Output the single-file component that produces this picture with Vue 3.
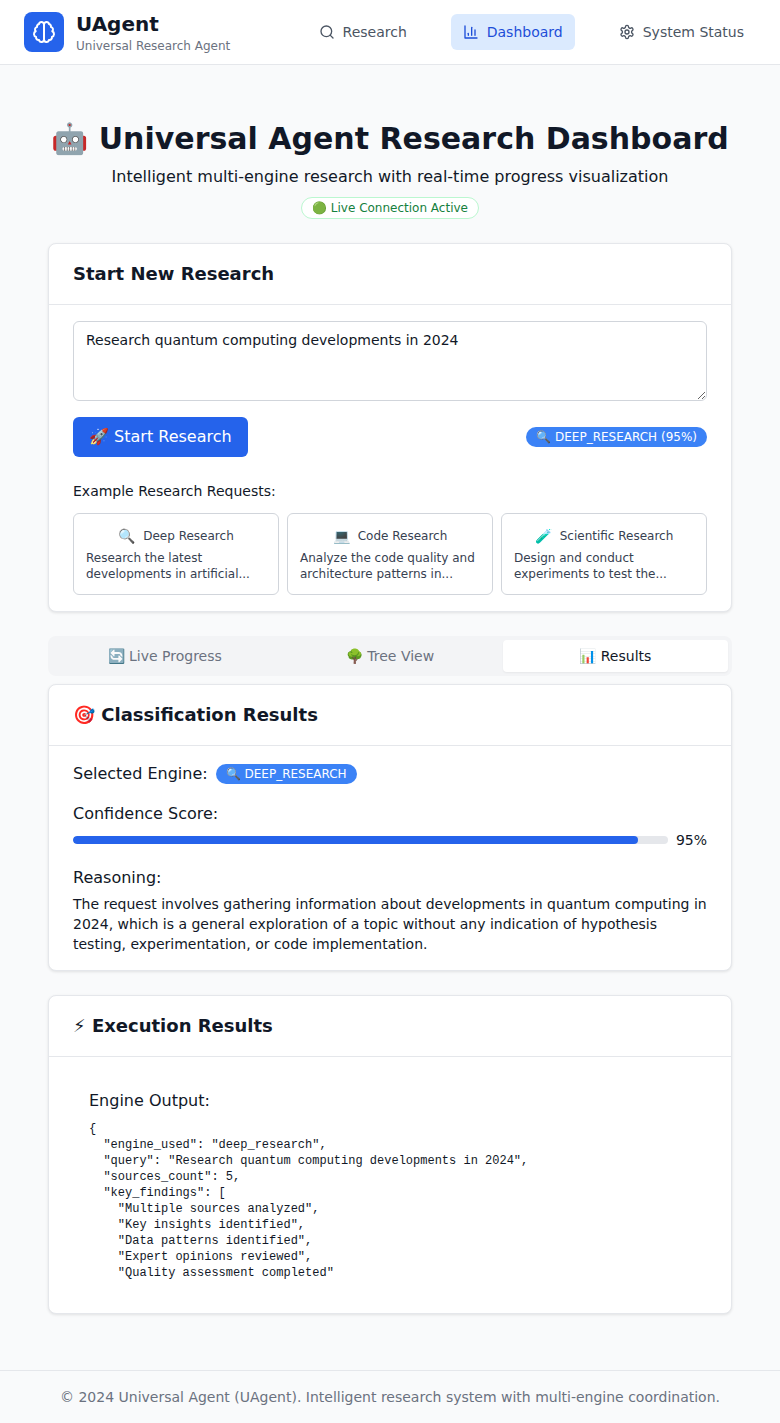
<template>
  <div class="page">
    <header class="topbar">
      <div class="brand">
        <div class="logo">
          <svg width="24" height="24" viewBox="0 0 24 24" fill="none" stroke="currentColor" stroke-width="2" stroke-linecap="round" stroke-linejoin="round">
            <path d="M9.5 2A2.5 2.5 0 0 1 12 4.5v15a2.5 2.5 0 0 1-4.96.44 2.5 2.5 0 0 1-2.96-3.08 3 3 0 0 1-.34-5.58 2.5 2.5 0 0 1 1.32-4.24 2.5 2.5 0 0 1 1.98-3A2.5 2.5 0 0 1 9.5 2Z" />
            <path d="M14.5 2A2.5 2.5 0 0 0 12 4.5v15a2.5 2.5 0 0 0 4.96.44 2.5 2.5 0 0 0 2.96-3.08 3 3 0 0 0 .34-5.58 2.5 2.5 0 0 0-1.32-4.24 2.5 2.5 0 0 0-1.98-3A2.5 2.5 0 0 0 14.5 2Z" />
          </svg>
        </div>
        <div>
          <div class="brand-name">UAgent</div>
          <div class="brand-sub">Universal Research Agent</div>
        </div>
      </div>
      <nav class="nav">
        <a class="nav-item">
          <svg width="16" height="16" viewBox="0 0 24 24" fill="none" stroke="currentColor" stroke-width="2" stroke-linecap="round" stroke-linejoin="round">
            <circle cx="11" cy="11" r="8" /><path d="m21 21-4.3-4.3" />
          </svg>
          Research
        </a>
        <a class="nav-item active">
          <svg width="16" height="16" viewBox="0 0 24 24" fill="none" stroke="currentColor" stroke-width="2" stroke-linecap="round" stroke-linejoin="round">
            <path d="M3 3v18h18" /><path d="M18 17V9" /><path d="M13 17V5" /><path d="M8 17v-3" />
          </svg>
          Dashboard
        </a>
        <a class="nav-item">
          <svg width="16" height="16" viewBox="0 0 24 24" fill="none" stroke="currentColor" stroke-width="2" stroke-linecap="round" stroke-linejoin="round">
            <path d="M12.22 2h-.44a2 2 0 0 0-2 2v.18a2 2 0 0 1-1 1.73l-.43.25a2 2 0 0 1-2 0l-.15-.08a2 2 0 0 0-2.73.73l-.22.38a2 2 0 0 0 .73 2.73l.15.1a2 2 0 0 1 1 1.72v.51a2 2 0 0 1-1 1.74l-.15.09a2 2 0 0 0-.73 2.73l.22.38a2 2 0 0 0 2.73.73l.15-.08a2 2 0 0 1 2 0l.43.25a2 2 0 0 1 1 1.73V20a2 2 0 0 0 2 2h.44a2 2 0 0 0 2-2v-.18a2 2 0 0 1 1-1.73l.43-.25a2 2 0 0 1 2 0l.15.08a2 2 0 0 0 2.73-.73l.22-.39a2 2 0 0 0-.73-2.73l-.15-.08a2 2 0 0 1-1-1.74v-.5a2 2 0 0 1 1-1.74l.15-.09a2 2 0 0 0 .73-2.73l-.22-.38a2 2 0 0 0-2.73-.73l-.15.08a2 2 0 0 1-2 0l-.43-.25a2 2 0 0 1-1-1.73V4a2 2 0 0 0-2-2z" />
            <circle cx="12" cy="12" r="3" />
          </svg>
          System Status
        </a>
      </nav>
    </header>

    <main class="main">
      <section class="hero">
        <h1>🤖 Universal Agent Research Dashboard</h1>
        <p>Intelligent multi-engine research with real-time progress visualization</p>
        <span class="live">🟢 Live Connection Active</span>
      </section>

      <section class="card">
        <div class="card-head"><h2>Start New Research</h2></div>
        <div class="card-body">
          <textarea class="query" v-model="query" rows="3"></textarea>
          <div class="actions">
            <button class="start" type="button">🚀 Start Research</button>
            <span class="pill">🔍 DEEP_RESEARCH (95%)</span>
          </div>
          <div class="examples-label">Example Research Requests:</div>
          <div class="examples">
            <div class="example" v-for="ex in examples" :key="ex.title">
              <div class="example-title"><span class="example-icon">{{ ex.icon }}</span>{{ ex.title }}</div>
              <div class="example-text">{{ ex.text }}</div>
            </div>
          </div>
        </div>
      </section>

      <div class="tabs">
        <div class="tab" v-for="t in tabs" :key="t" :class="{ on: t === tab }">{{ t }}</div>
      </div>

      <section class="card">
        <div class="card-head"><h2>🎯 Classification Results</h2></div>
        <div class="card-body">
          <div class="engine-row">
            <span class="label">Selected Engine:</span>
            <span class="pill">🔍 DEEP_RESEARCH</span>
          </div>
          <div class="label conf-label">Confidence Score:</div>
          <div class="conf-row">
            <div class="track"><div class="fill" :style="{ width: confidence + '%' }"></div></div>
            <span class="conf-value">{{ confidence }}%</span>
          </div>
          <div class="label reason-label">Reasoning:</div>
          <p class="reason">The request involves gathering information about developments in quantum computing in 2024, which is a general exploration of a topic without any indication of hypothesis testing, experimentation, or code implementation.</p>
        </div>
      </section>

      <section class="card">
        <div class="card-head"><h2>⚡ Execution Results</h2></div>
        <div class="card-body">
          <div class="output">
            <div class="label output-label">Engine Output:</div>
            <pre>{{ output }}</pre>
          </div>
        </div>
      </section>
    </main>

    <footer class="footer">© 2024 Universal Agent (UAgent). Intelligent research system with multi-engine coordination.</footer>
  </div>
</template>

<script setup>
import { ref } from 'vue'

const query = ref('Research quantum computing developments in 2024')
const tab = ref('📊 Results')
const tabs = ['🔄 Live Progress', '🌳 Tree View', '📊 Results']
const confidence = 95

const examples = [
  { icon: '🔍', title: 'Deep Research', text: 'Research the latest developments in artificial...' },
  { icon: '💻', title: 'Code Research', text: 'Analyze the code quality and architecture patterns in...' },
  { icon: '🧪', title: 'Scientific Research', text: 'Design and conduct experiments to test the...' }
]

const output = `{
  "engine_used": "deep_research",
  "query": "Research quantum computing developments in 2024",
  "sources_count": 5,
  "key_findings": [
    "Multiple sources analyzed",
    "Key insights identified",
    "Data patterns identified",
    "Expert opinions reviewed",
    "Quality assessment completed"`
</script>

<style>
body {
  background: #f9fafb;
}
</style>

<style scoped>
.page {
  font-family: "DejaVu Sans", sans-serif;
  color: #111827;
  background: #f9fafb;
}
.topbar {
  display: flex;
  justify-content: space-between;
  align-items: center;
  height: 64px;
  padding: 0 24px;
  background: #fff;
  border-bottom: 1px solid #e5e7eb;
}
.brand {
  display: flex;
  align-items: center;
  gap: 12px;
}
.logo {
  width: 40px;
  height: 40px;
  display: flex;
  align-items: center;
  justify-content: center;
  background: #2563eb;
  color: #fff;
  border-radius: 8px;
}
.brand-name {
  font-size: 20px;
  line-height: 28px;
  font-weight: 700;
}
.brand-sub {
  font-size: 12px;
  line-height: 16px;
  color: #6b7280;
}
.nav {
  display: flex;
  gap: 32px;
}
.nav-item {
  display: flex;
  align-items: center;
  gap: 8px;
  padding: 8px 12px;
  font-size: 14px;
  line-height: 20px;
  color: #4b5563;
  border-radius: 6px;
}
.nav-item.active {
  background: #dbeafe;
  color: #1d4ed8;
}
.main {
  padding: 56px 48px 32px;
}
.hero {
  text-align: center;
  margin-bottom: 24px;
}
.hero h1 {
  margin: 0 0 8px;
  font-size: 30px;
  line-height: 36px;
  font-weight: 700;
}
.hero p {
  margin: 0 0 8px;
  font-size: 16px;
  line-height: 24px;
  color: #111827;
}
.live {
  display: inline-block;
  padding: 2px 10px;
  font-size: 12px;
  line-height: 16px;
  color: #15803d;
  background: #fff;
  border: 1px solid #bbf7d0;
  border-radius: 999px;
}
.card {
  background: #fff;
  border: 1px solid #e5e7eb;
  border-radius: 8px;
  box-shadow: 0 1px 3px rgba(0, 0, 0, 0.1);
  margin-bottom: 24px;
}
.card-head {
  padding: 16px 24px;
  border-bottom: 1px solid #e5e7eb;
}
.card-head h2 {
  margin: 0;
  font-size: 18px;
  line-height: 28px;
  font-weight: 700;
}
.card-body {
  padding: 16px 24px;
}
.query {
  display: block;
  box-sizing: border-box;
  width: 100%;
  height: 80px;
  padding: 8px 12px;
  font-family: inherit;
  font-size: 14px;
  line-height: 20px;
  color: #111827;
  border: 1px solid #d1d5db;
  border-radius: 6px;
}
.actions {
  display: flex;
  justify-content: space-between;
  align-items: center;
  margin-top: 16px;
}
.start {
  padding: 8px 16px;
  font-family: inherit;
  font-size: 16px;
  line-height: 24px;
  color: #fff;
  background: #2563eb;
  border: 0;
  border-radius: 6px;
}
.pill {
  display: inline-block;
  padding: 2px 10px;
  font-size: 12px;
  line-height: 16px;
  color: #fff;
  background: #3b82f6;
  border-radius: 999px;
}
.examples-label {
  margin-top: 24px;
  font-size: 14px;
  line-height: 20px;
}
.examples {
  display: grid;
  grid-template-columns: repeat(3, 1fr);
  gap: 8px;
  margin-top: 12px;
}
.example {
  padding: 12px;
  background: #fff;
  border: 1px solid #d1d5db;
  border-radius: 6px;
}
.example-title {
  display: flex;
  justify-content: center;
  align-items: center;
  gap: 8px;
  font-size: 12px;
  line-height: 20px;
  color: #374151;
}
.example-icon {
  font-size: 14px;
}
.example-text {
  margin-top: 4px;
  font-size: 12px;
  line-height: 16px;
  color: #374151;
}
.tabs {
  display: flex;
  padding: 4px;
  margin-bottom: 8px;
  background: #f3f4f6;
  border-radius: 8px;
}
.tab {
  flex: 1;
  text-align: center;
  font-size: 14px;
  line-height: 20px;
  padding: 6px 12px;
  color: #6b7280;
  border-radius: 4px;
}
.tab.on {
  background: #fff;
  color: #111827;
  box-shadow: 0 1px 2px rgba(0, 0, 0, 0.05);
}
.label {
  font-size: 16px;
  line-height: 24px;
  color: #111827;
}
.engine-row {
  display: flex;
  align-items: center;
  gap: 8px;
}
.conf-label {
  margin-top: 16px;
}
.conf-row {
  display: flex;
  align-items: center;
  gap: 8px;
  margin-top: 4px;
}
.track {
  flex: 1;
  height: 8px;
  background: #e5e7eb;
  border-radius: 999px;
  overflow: hidden;
}
.fill {
  height: 100%;
  background: #2563eb;
  border-radius: 999px;
}
.conf-value {
  font-size: 14px;
  line-height: 20px;
}
.reason-label {
  margin-top: 16px;
}
.reason {
  margin: 4px 0 0;
  font-size: 14px;
  line-height: 20px;
  color: #111827;
}
.output {
  padding: 16px;
}
.output-label {
  margin-bottom: 8px;
}
pre {
  margin: 0;
  height: 160px;
  overflow: hidden;
  font-family: "Liberation Mono", monospace;
  font-size: 12px;
  line-height: 16px;
  color: #111827;
}
.footer {
  padding: 16px 24px;
  text-align: center;
  font-size: 14px;
  line-height: 20px;
  color: #6b7280;
  background: #f9fafb;
  border-top: 1px solid #e5e7eb;
}
</style>
